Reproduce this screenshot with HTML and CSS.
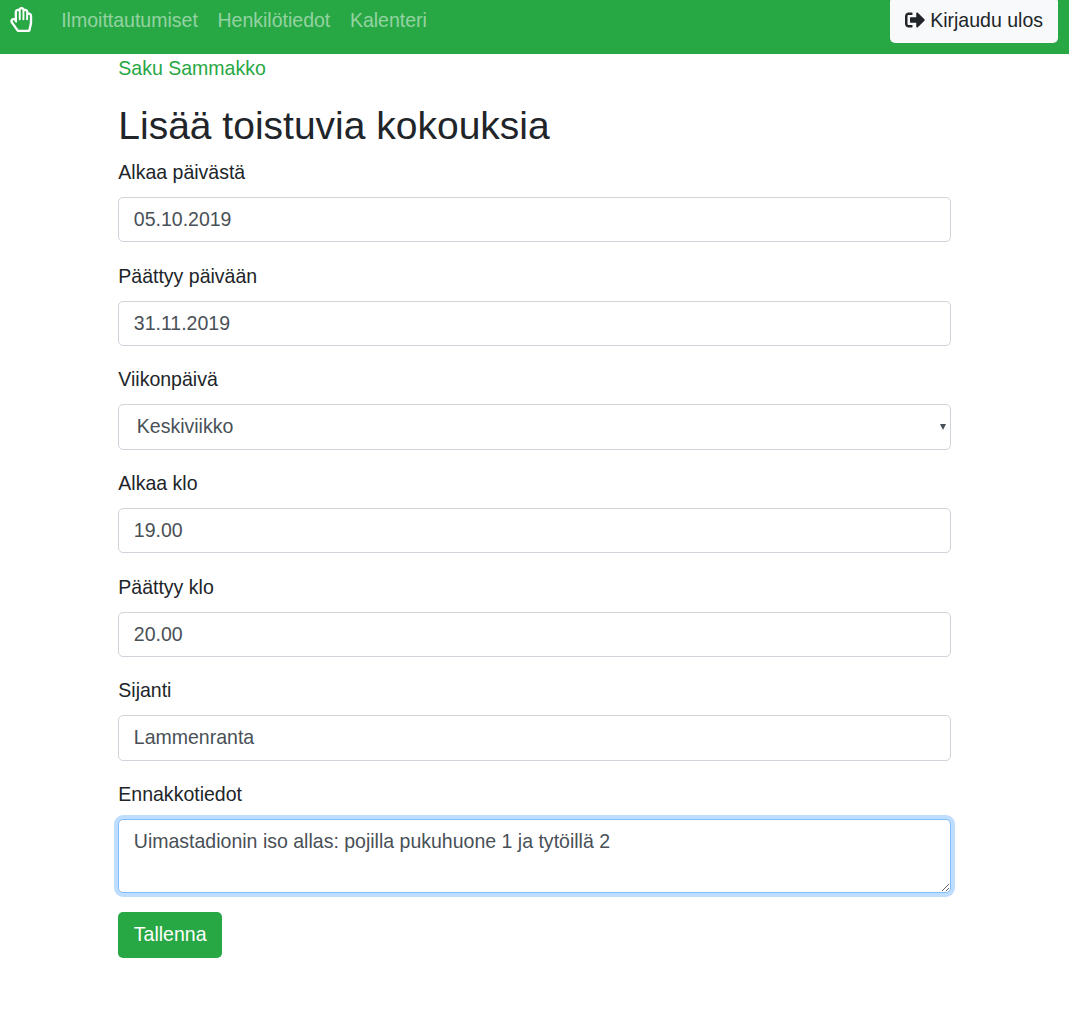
FILE: index.html
```html
<!DOCTYPE html>
<html lang="fi">
<head>
<meta charset="utf-8">
<title>Lisää toistuvia kokouksia</title>
<link rel="stylesheet" href="styles.css">
</head>
<body>
<nav class="navbar">
  <a class="brand" href="#" aria-label="Etusivu"><svg class="hand" viewBox="0 0 448 512"><path d="M372.57 112.641v-10.825c0-43.612-40.52-76.691-83.039-65.546-25.629-49.5-94.09-47.45-117.982.747C130.269 26.456 89.144 57.945 89.144 102v126.13c-19.953-7.427-43.308-5.068-62.083 8.871-29.355 21.796-35.794 63.333-14.55 93.153L132.48 498.569a32 32 0 0 0 26.062 13.432h222.897c14.904 0 27.835-10.289 31.182-24.813l30.184-130.958A203.637 203.637 0 0 0 448 310.564V179c0-40.62-35.523-71.992-75.43-66.359zm27.427 197.922c0 11.731-1.334 23.469-3.965 34.886L368.707 464h-201.92L51.591 302.303c-14.439-20.27 15.023-42.776 29.394-22.605l27.128 38.079c8.995 12.626 29.031 6.287 29.031-9.283V102c0-25.645 36.571-24.81 36.571.691V256c0 8.837 7.163 16 16 16h6.856c8.837 0 16-7.163 16-16V67c0-25.663 36.571-24.81 36.571.691V256c0 8.837 7.163 16 16 16h6.856c8.837 0 16-7.163 16-16V101.125c0-25.672 36.57-24.81 36.57.691V256c0 8.837 7.163 16 16 16h6.857c8.837 0 16-7.163 16-16v-76.309c0-26.242 36.57-25.64 36.57-.691v131.563z"/></svg></a>
  <div class="links">
    <a href="#">Ilmoittautumiset</a>
    <a href="#">Henkilötiedot</a>
    <a href="#">Kalenteri</a>
  </div>
  <button class="btn btn-light" type="button"><svg class="exit" viewBox="0 0 512 512"><path d="M497 273L329 441c-15 15-41 4.5-41-17v-96H152c-13.3 0-24-10.7-24-24v-96c0-13.3 10.7-24 24-24h136V88c0-21.4 25.9-32 41-17l168 168c9.3 9.4 9.3 24.6 0 34zM192 436v-40c0-6.6-5.4-12-12-12H96c-17.7 0-32-14.3-32-32V160c0-17.7 14.3-32 32-32h84c6.6 0 12-5.4 12-12V76c0-6.6-5.4-12-12-12H96c-53 0-96 43-96 96v192c0 53 43 96 96 96h84c6.6 0 12-5.4 12-12z"/></svg>Kirjaudu ulos</button>
</nav>
<main class="container">
  <a class="user" href="#">Saku Sammakko</a>
  <h2>Lisää toistuvia kokouksia</h2>
  <form>
    <div class="group"><label for="from">Alkaa päivästä</label><input class="control" id="from" value="05.10.2019"></div>
    <div class="group"><label for="to">Päättyy päivään</label><input class="control" id="to" value="31.11.2019"></div>
    <div class="group"><label for="day">Viikonpäivä</label><div class="select"><select class="control" id="day"><option>Keskiviikko</option></select><svg class="caret" viewBox="0 0 6 6"><path d="M0 0h6L3 6z"/></svg></div></div>
    <div class="group"><label for="start">Alkaa klo</label><input class="control" id="start" value="19.00"></div>
    <div class="group"><label for="end">Päättyy klo</label><input class="control" id="end" value="20.00"></div>
    <div class="group"><label for="place">Sijanti</label><input class="control" id="place" value="Lammenranta"></div>
    <div class="group"><label for="info">Ennakkotiedot</label><textarea class="control active" id="info" spellcheck="false">Uimastadionin iso allas: pojilla pukuhuone 1 ja tytöillä 2</textarea></div>
    <button class="btn btn-success" type="button">Tallenna</button>
  </form>
</main>
</body>
</html>
```

FILE: styles.css
```css
html {
  font-size: 19.52px;
}

*, *::before, *::after {
  box-sizing: border-box;
}

body {
  margin: 0;
  background: #fff;
  color: #212529;
  font-family: "Liberation Sans", Arial, sans-serif;
  font-size: 1rem;
  line-height: 29px;
}

a {
  text-decoration: none;
}

input, select, textarea, button {
  margin: 0;
  font: inherit;
}

.navbar {
  display: flex;
  align-items: flex-start;
  height: 54px;
  padding: 0 11px 0 10px;
  background: #28a745;
}

.brand {
  margin-top: 6.5px;
  line-height: 0;
}

.hand {
  width: 22.5px;
  height: 25px;
  fill: #fff;
}

.links {
  display: flex;
  gap: 19.6px;
  margin: 6px auto 0 28.7px;
}

.links a {
  color: rgba(255, 255, 255, 0.5);
}

.btn {
  display: inline-flex;
  align-items: center;
  height: 46px;
  padding: 0 15.5px;
  border: 0;
  border-radius: 5px;
  white-space: nowrap;
}

.btn-light {
  margin-top: -3px;
  padding: 0 15px;
  background: #f8f9fa;
  color: #212529;
}

.exit {
  width: 20px;
  height: 20px;
  margin-right: 5px;
  fill: currentColor;
}

.btn-success {
  padding: 0 15.5px 2px 15.8px;
  background: #28a745;
  color: #fff;
}

.container {
  width: 833px;
  margin: 0 auto;
  padding-top: 0.4px;
}

.user,
h2,
label {
  padding-left: 0.3px;
}

.user {
  display: block;
  color: #28a745;
}

h2 {
  margin: 20px 0 8.35px;
  font-size: 39px;
  font-weight: 400;
  line-height: 46.5px;
}

.group {
  margin-bottom: 19.4px;
}

.group:last-of-type {
  margin-bottom: 19.2px;
}

label {
  display: block;
  margin-bottom: 9.9px;
}

.control {
  display: block;
  width: 100%;
  height: 45.35px;
  padding: 6.8px 14.8px 7px;
  border: 1px solid #ced4da;
  border-radius: 5px;
  outline: 0;
  background: #fff;
  color: #495057;
}

.select {
  position: relative;
}

.select .control {
  padding: 0 17.8px 1px;
  appearance: none;
}

.caret {
  position: absolute;
  top: 20px;
  right: 5px;
  width: 6px;
  height: 6px;
  fill: #495057;
}

textarea.control {
  height: 74px;
  resize: vertical;
}

.control.active {
  border-color: #80bdff;
  box-shadow: 0 0 0 4px rgba(0, 123, 255, 0.25);
}
```
